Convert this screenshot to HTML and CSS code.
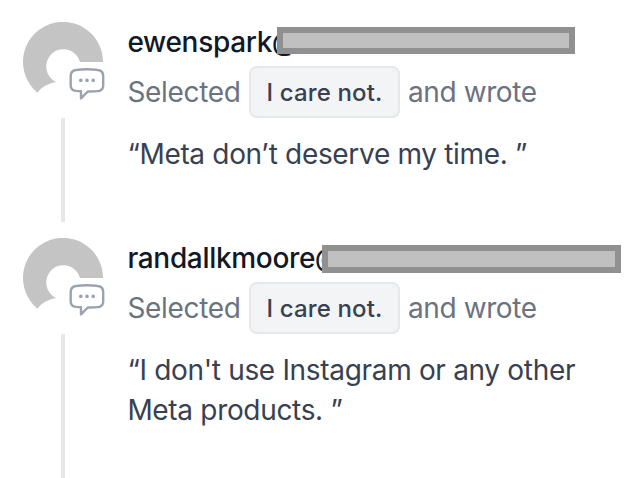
FILE: index.html
```html
<!DOCTYPE html>
<html lang="en">

<head>
    <meta charset="UTF-8">
    <meta name="viewport" content="width=device-width, initial-scale=1.0">
    <title>Responses</title>
    <link rel="stylesheet" href="styles.css">
</head>

<body>
    <svg class="sprite">
        <symbol id="avatar" viewBox="0 0 80 80">
            <path fill="#c4c4c4" d="M80 40A40 40 0 1 0 14.5 70.7Q20 62.5 33 60A17.2 17.2 0 1 1 57 40Z"/>
        </symbol>
        <symbol id="chat" viewBox="0 0 36 36">
            <path fill="#fff" stroke="#9ca3af" stroke-width="2.4" stroke-linejoin="round" d="M7 3Q18 1.4 29 3Q34.2 3.6 34.2 9V18.5Q34.2 23.6 29 24.1Q23.5 24.7 18.8 24.5L12 31.4V24.3L7 23.9Q1.7 23.3 1.7 18.5V9Q1.7 3.6 7 3Z"/>
            <g fill="#9ca3af">
                <circle cx="11.8" cy="13.4" r="1.8"/>
                <circle cx="18" cy="13.4" r="1.8"/>
                <circle cx="24.2" cy="13.4" r="1.8"/>
            </g>
        </symbol>
    </svg>
    <ul class="feed">
        <li class="item">
            <div class="side">
                <div class="avatar">
                    <svg class="person"><use href="#avatar"/></svg>
                    <svg class="badge"><use href="#chat"/></svg>
                </div>
                <div class="line"></div>
            </div>
            <div class="content">
                <div class="email"><span class="name">ewenspark<span class="at">@</span></span><span class="redacted"></span></div>
                <div class="meta"><span class="selected">Selected</span><span class="tag">I care not.</span><span class="wrote">and wrote</span></div>
                <p class="quote">“Meta don’t deserve my time. ”</p>
            </div>
        </li>
        <li class="item item-last">
            <div class="side">
                <div class="avatar">
                    <svg class="person"><use href="#avatar"/></svg>
                    <svg class="badge"><use href="#chat"/></svg>
                </div>
                <div class="line"></div>
            </div>
            <div class="content">
                <div class="email"><span class="name">randallkmoore<span class="at">@</span></span><span class="redacted redacted-long"></span></div>
                <div class="meta"><span class="selected">Selected</span><span class="tag">I care not.</span><span class="wrote">and wrote</span></div>
                <p class="quote">“I don't use Instagram or any other<br>Meta products. ”</p>
            </div>
        </li>
    </ul>
</body>

</html>
```
FILE: styles.css
```css
* {
    box-sizing: border-box;
}

body {
    margin: 0;
    background-color: #fff;
    font-family: Inter, "Liberation Sans", sans-serif;
    font-size: 28px;
    line-height: 40px;
    letter-spacing: -0.32px;
    color: #374151;
    overflow: hidden;
}

.sprite {
    display: none;
}

.feed {
    list-style: none;
    margin: 0;
    padding: 22px 0 0 23px;
}

.item {
    display: flex;
    gap: 24px;
    height: 216px;
}

.item-last {
    height: 240px;
}

.side {
    display: flex;
    flex-direction: column;
    align-items: center;
    width: 80px;
}

.avatar {
    position: relative;
    width: 80px;
    height: 80px;
}

.person {
    display: block;
    width: 80px;
    height: 80px;
}

.badge {
    position: absolute;
    left: 46px;
    top: 45px;
    width: 36px;
    height: 36px;
}

.line {
    flex: 1;
    width: 4px;
    margin: 16px 0;
    background-color: #e5e7eb;
}

.item-last .line {
    margin-bottom: 0;
}

.content {
    flex: 1;
    padding-left: 0.4px;
    white-space: nowrap;
}

.email {
    display: flex;
    height: 40px;
    font-weight: 500;
    letter-spacing: -0.32px;
    line-height: 41px;
    color: #111827;
}

.name {
    width: 149.6px;
}

.at {
    font-size: 25px;
    line-height: 1;
    vertical-align: 1px;
}

/* covers the rest of the address */
.redacted {
    position: relative;
    width: 298px;
    height: 27px;
    margin-top: 5px;
    border: 6px solid #909090;
    background-color: #c0c0c0;
}

.item-last .name {
    width: 194.6px;
}

.redacted-long {
    width: 299px;
    height: 28px;
    margin-top: 7px;
}

.meta {
    display: flex;
    align-items: center;
    height: 52px;
    margin-top: 4px;
    color: #6b7280;
}

.selected {
    width: 113.6px;
}

.tag {
    width: 151px;
    height: 52px;
    margin-left: 8px;
    border: 2px solid #e5e7eb;
    border-radius: 8px;
    background-color: #f3f4f6;
    font-size: 24px;
    font-weight: 500;
    line-height: 49px;
    letter-spacing: 0.15px;
    text-align: center;
    color: #374151;
}

.wrote {
    margin-left: 8px;
    letter-spacing: -0.4px;
}

.quote {
    margin: 16px 0 0;
}
```
